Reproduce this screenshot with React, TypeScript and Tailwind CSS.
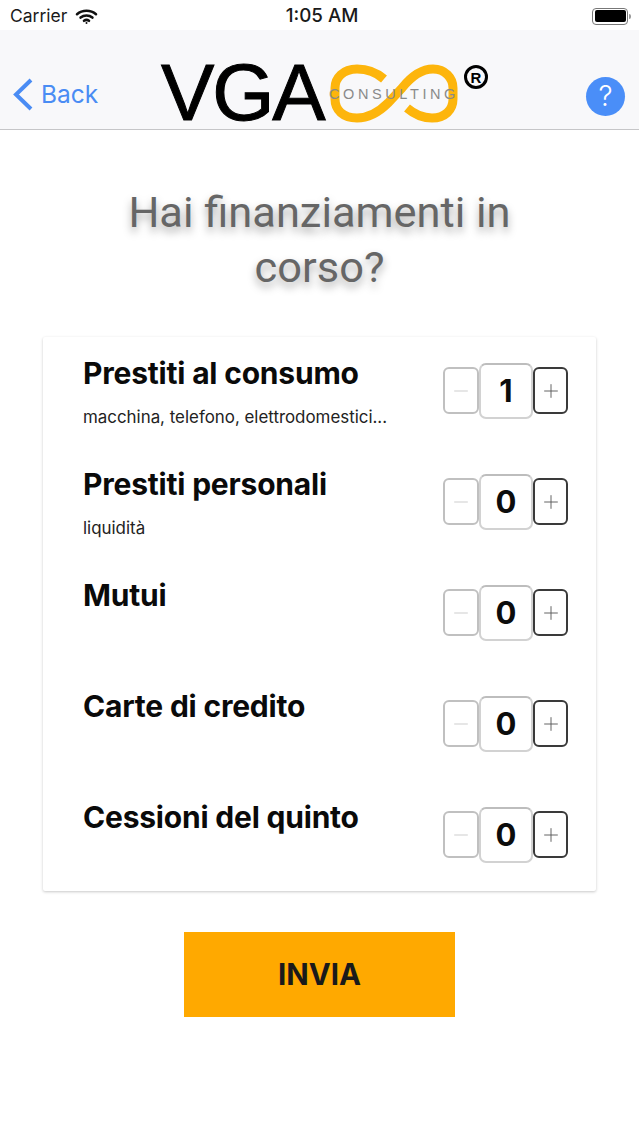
import { Minus, Plus } from 'lucide-react';

const rows = [
  { title: 'Prestiti al consumo', sub: 'macchina, telefono, elettrodomestici...', count: 1 },
  { title: 'Prestiti personali', sub: 'liquidità', count: 0 },
  { title: 'Mutui', count: 0 },
  { title: 'Carte di credito', count: 0 },
  { title: 'Cessioni del quinto', count: 0 },
];

function StatusBar() {
  return (
    <div className="h-[30px] pt-[2px] bg-white flex items-center justify-between pl-[10px] pr-[8px] font-['Inter',sans-serif] text-[#1a1a1a]">
      <div className="flex items-center gap-[8px] w-[200px]">
        <span className="text-[17.5px]">Carrier</span>
        <svg width="23" height="17" viewBox="0 0 23 17" fill="none" stroke="#111" strokeLinecap="round">
          <path d="M2 6.2c5.4-4.6 13.6-4.6 19 0" strokeWidth="2.6" />
          <path d="M5.6 9.6c3.4-2.8 8.4-2.8 11.8 0" strokeWidth="2.6" />
          <path d="M9 12.8c1.5-1.1 3.5-1.1 5 0" strokeWidth="2.6" />
          <circle cx="11.5" cy="15" r="1" fill="#111" stroke="none" />
        </svg>
      </div>
      <span className="font-medium text-[18.8px] ml-[3px]">1:05 AM</span>
      <div className="w-[200px] flex justify-end items-center">
        <div className="w-[36px] h-[17px] rounded-[4px] border border-[#777] p-[1.5px]">
          <div className="w-full h-full bg-black rounded-[2px]" />
        </div>
        <div className="w-[2px] h-[5px] bg-[#999] ml-[1px] rounded-r-sm" />
      </div>
    </div>
  );
}

function Logo() {
  return (
    <div className="relative flex items-center w-[330px] h-[99px]">
      <span className="font-['Liberation_Sans',sans-serif] text-[80px] leading-none text-black tracking-[-2.2px] mt-[27px] [-webkit-text-stroke:1px_black]">VGA</span>
      <svg className="absolute left-[169px] top-[34px]" width="128" height="59" viewBox="0 0 128 59" fill="none">
        <path
          d="M54 15C46 8 38 5 27 5 13 5 5 14 5 24V35C5 46 13 54 27 54 40 54 50 47 58 39L72 24C80 14 90 5 103 5 115 5 123 14 123 24V35C123 46 115 54 102 54 92 54 84 50 77 44"
          stroke="#fdb50c"
          strokeWidth="9"
        />
      </svg>
      <span className="absolute left-[168px] top-[57px] font-['Liberation_Sans',sans-serif] text-[14.5px] leading-none tracking-[3.6px] text-[#8a8a8a]">CONSULTING</span>
      <span className="absolute left-[303px] top-[35px] w-[24px] h-[24px] rounded-full border-[3px] border-black flex items-center justify-center font-['Liberation_Sans',sans-serif] font-bold text-[15px] leading-none text-black">R</span>
    </div>
  );
}

function NavBar() {
  return (
    <div className="h-[100px] bg-[#f8f8fa] border-b border-[#c6c6c8] flex items-center font-['Inter',sans-serif]">
      <div className="w-[161px] flex items-center pl-[12px] mt-[30px] text-[#4a8cf4]">
        <svg width="22" height="33" viewBox="0 0 22 33" fill="none" stroke="currentColor" strokeWidth="4" className="mr-[7px]">
          <path d="M19 2 4 16.5 19 31" />
        </svg>
        <span className="text-[24.5px] leading-none">Back</span>
      </div>
      <Logo />
      <div className="ml-[95px] mt-[33px] w-[39px] h-[39px] rounded-full bg-[#4a8ef8] flex items-center justify-center text-white text-[28px] font-light leading-none">
        ?
      </div>
    </div>
  );
}

function Stepper({ count }: { count: number }) {
  return (
    <div className="flex items-center mt-[-4px]">
      <div className="w-[36px] h-[47px] border-2 border-[#c0c0c0] rounded-[6px] flex items-center justify-center text-[#c8c8c8]">
        <Minus size={22} strokeWidth={1} />
      </div>
      <div className="w-[54px] h-[56px] border-2 border-[#d2d2d2] border-t-[#bdbdbd] rounded-[7px] flex items-center justify-center text-[31px] font-bold text-[#0c0c0c] leading-none">
        {count}
      </div>
      <div className="w-[35px] h-[47px] border-2 border-[#3a3a3a] rounded-[6px] flex items-center justify-center text-[#555]">
        <Plus size={22} strokeWidth={1} />
      </div>
    </div>
  );
}

export default function App() {
  return (
    <div className="w-[639px] h-[1136px] bg-white overflow-hidden font-['Inter',sans-serif]">
      <StatusBar />
      <NavBar />
      <h1 className="mt-[55px] text-center font-['Roboto',sans-serif] font-normal text-[43.4px] leading-[55px] text-[#666] px-[100px] [text-shadow:0_5px_9px_rgba(0,0,0,0.35)]">
        Hai finanziamenti in corso?
      </h1>
      <div className="mx-[43px] mt-[42px] h-[554px] bg-white rounded-[2px] shadow-[0_1px_3px_rgba(0,0,0,0.22)]">
        {rows.map((r) => (
          <div key={r.title} className="h-[111px] flex items-center justify-between pl-[40px] pr-[28px]">
            <div className="self-start pt-[18px]">
              <div className="text-[30px] leading-[36px] font-bold tracking-[-0.2px] text-[#0a0a0a]">{r.title}</div>
              {r.sub && <div className="mt-[16px] text-[16.9px] leading-[20px] text-[#222]">{r.sub}</div>}
            </div>
            <Stepper count={r.count} />
          </div>
        ))}
      </div>
      <button className="block ml-[184px] mt-[41px] w-[271px] h-[85px] bg-[#ffa900] text-[29.5px] font-bold text-[#1a1a1a]">
        INVIA
      </button>
    </div>
  );
}
